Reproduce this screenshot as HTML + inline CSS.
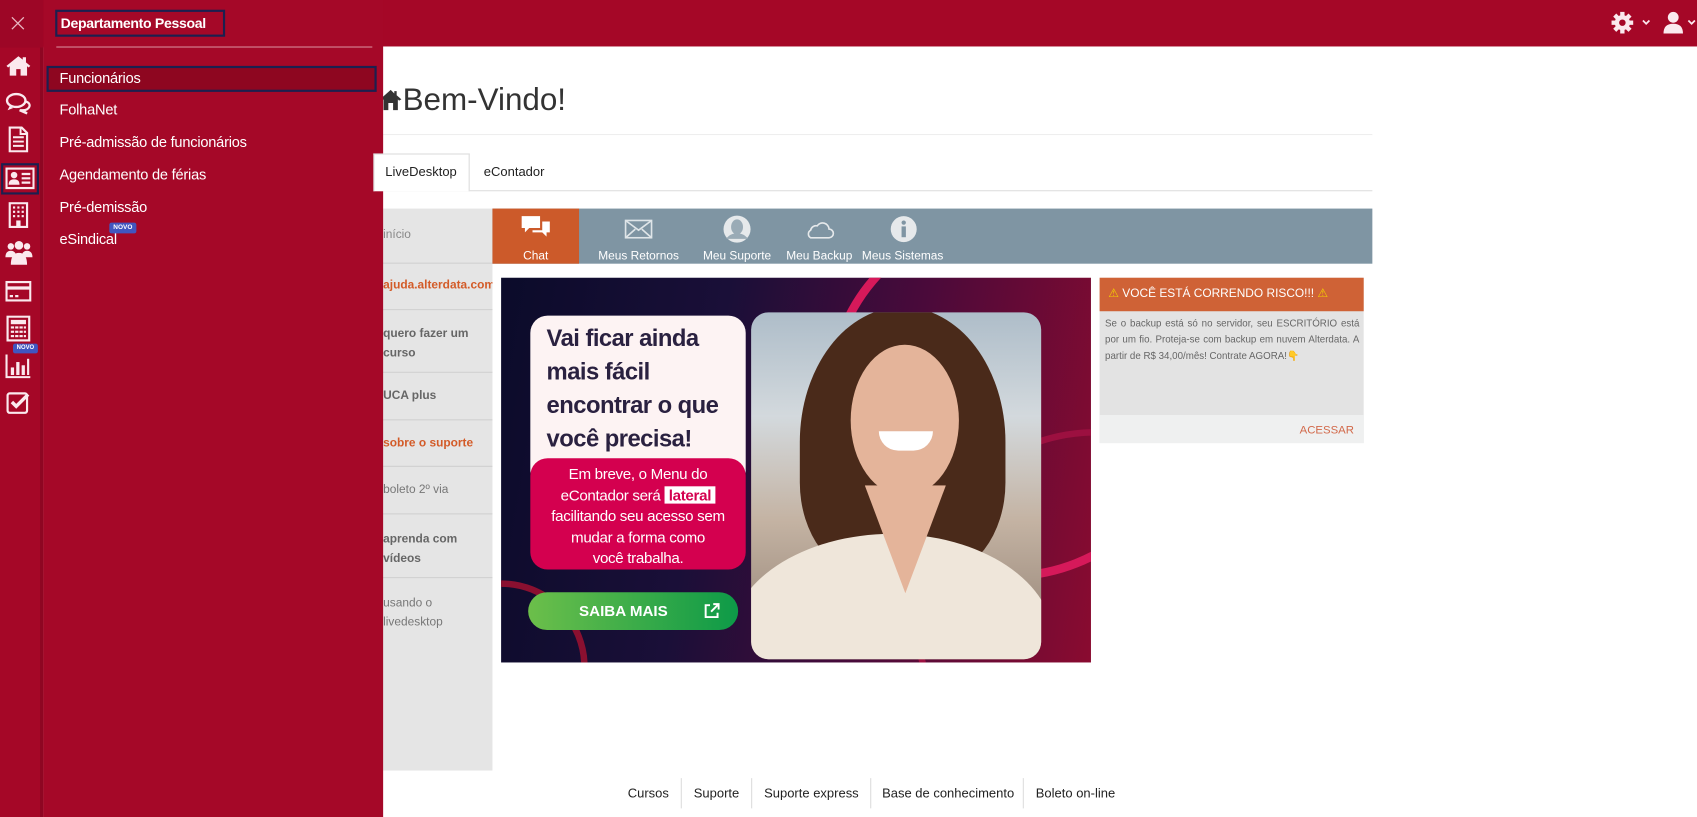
<!DOCTYPE html>
<html><head><meta charset="utf-8"><style>
*{margin:0;padding:0;box-sizing:border-box}
html,body{width:1697px;height:817px;overflow:hidden;background:#fff}
#s{position:absolute;left:0;top:0;width:1568px;height:756px;transform:scale(1.0823,1.0807);transform-origin:0 0;font-family:"Liberation Sans",sans-serif;background:#fff}
.a{position:absolute}
.top{left:0;top:0;width:1568px;height:43px;background:#a50727}
.strip{left:0;top:0;width:40px;height:756px;background:#a50727;border-right:3px solid #8e0622}
.panel{left:40px;top:0;width:314px;height:756px;background:#a50828}
.mi{position:absolute;left:55px;color:#fff;font-size:13.5px;letter-spacing:-0.2px;white-space:nowrap}
.ic{position:absolute;left:5px;width:24px;height:24px}
.gm{position:absolute;left:354px;width:101px;border-bottom:1px solid #d0d0d0;font-size:11px;color:#777;padding-left:0}
.tb{position:absolute;top:231px;color:#fff;font-size:11px;text-align:center}
.fl{position:absolute;top:727px;font-size:12px;color:#222}
.sep{position:absolute;top:720px;width:1px;height:28px;background:#ddd}
</style></head><body><div id="s">

<div class="a" style="left:350px;top:77px;font-size:29px;color:#333;white-space:nowrap">
<svg width="22" height="22" viewBox="0 0 20 20" style="vertical-align:-1px"><path d="M10 2 L1 10 L3 11 L4 10 V19 H8 V13 H12 V19 H16 V10 L17 11 L19 10 L15 6.5 V3 H13 V5 Z" fill="#333"/></svg>Bem-Vindo!</div>
<div class="a" style="left:354px;top:124px;width:914px;height:1px;background:#eee"></div>
<div class="a" style="left:345px;top:142px;width:89px;height:35px;border:1px solid #ddd;border-bottom:none;background:#fff;z-index:2"></div>
<div class="a" style="left:356px;top:152px;font-size:12px;color:#222;z-index:3">LiveDesktop</div>
<div class="a" style="left:447px;top:152px;font-size:12px;color:#222">eContador</div>
<div class="a" style="left:354px;top:176px;width:914px;height:1px;background:#ddd"></div>

<div class="a" style="left:354px;top:193px;width:101px;height:520px;background:#e5e5e5"></div>
<div class="gm" style="top:193px;height:51px;padding-top:18px;color:#888">início</div>
<div class="gm" style="top:244px;height:43px;padding-top:14px;color:#d35b28;font-weight:bold;white-space:nowrap;overflow:hidden">ajuda.alterdata.com.</div>
<div class="gm" style="top:287px;height:58px;padding-top:13px;color:#666;font-weight:bold;line-height:18px">quero fazer um<br>curso</div>
<div class="gm" style="top:345px;height:44px;padding-top:15px;color:#666;font-weight:bold">UCA plus</div>
<div class="gm" style="top:389px;height:43px;padding-top:15px;color:#d35b28;font-weight:bold">sobre o suporte</div>
<div class="gm" style="top:432px;height:44px;padding-top:15px;color:#777">boleto 2º via</div>
<div class="gm" style="top:476px;height:59px;padding-top:14px;color:#666;font-weight:bold;line-height:18px">aprenda com<br>vídeos</div>
<div class="gm" style="top:535px;height:60px;padding-top:14px;color:#777;border:none;line-height:18px">usando o<br>livedesktop</div>

<div class="a" style="left:455px;top:193px;width:813px;height:51px;background:#7f95a3"></div>
<div class="a" style="left:455px;top:193px;width:80px;height:51px;background:#cc5a2a"></div>
<svg class="a" style="left:480px;top:198px" width="30" height="26" viewBox="0 0 30 26"><path d="M2 2h17v11H9l-4 4v-4H2z" fill="#fff"/><path d="M21 7h7v10h-3v4l-4-4h-9v-2h9z" fill="#fff"/></svg>
<div class="tb" style="left:455px;width:80px">Chat</div>
<svg class="a" style="left:577px;top:203px" width="26" height="18" viewBox="0 0 26 18"><rect x="1" y="1" width="24" height="16" fill="none" stroke="#dfe5e8" stroke-width="1.5"/><path d="M1 1l12 9 12-9M1 17l9-8M25 17l-9-8" stroke="#dfe5e8" stroke-width="1.5" fill="none"/></svg>
<div class="tb" style="left:545px;width:90px">Meus Retornos</div>
<svg class="a" style="left:668px;top:199px" width="26" height="26" viewBox="0 0 26 26"><circle cx="13" cy="13" r="12.5" fill="#e6e9eb"/><ellipse cx="13" cy="11" rx="5.5" ry="7" fill="#9aabb6"/><path d="M3 22c3-4 6-5 10-5s7 1 10 5" fill="#9aabb6"/></svg>
<div class="tb" style="left:645px;width:72px">Meu Suporte</div>
<svg class="a" style="left:743px;top:203px" width="28" height="18" viewBox="0 0 28 18"><path d="M6 17h17a4 4 0 0 0 0-8 6 6 0 0 0-11-3 5 5 0 0 0-6 4 4 4 0 0 0 0 7z" fill="none" stroke="#e6e9eb" stroke-width="1.5"/></svg>
<div class="tb" style="left:722px;width:70px">Meu Backup</div>
<svg class="a" style="left:822px;top:199px" width="26" height="26" viewBox="0 0 26 26"><circle cx="13" cy="13" r="12" fill="#e6e9eb"/><circle cx="13" cy="7" r="2" fill="#7f95a3"/><rect x="11" y="10.5" width="4" height="10" fill="#7f95a3"/></svg>
<div class="tb" style="left:794px;width:80px">Meus Sistemas</div>

<div class="a" style="left:463px;top:257px;width:545px;height:356px;background:linear-gradient(100deg,#0b0b2a 0%,#1a0f38 35%,#4a0a3a 65%,#8a0b30 100%);overflow:hidden">
 <div class="a" style="left:300px;top:-60px;width:340px;height:340px;border-radius:50%;border:8px solid #d6195a"></div>
 <div class="a" style="left:380px;top:140px;width:340px;height:340px;border-radius:50%;border:6px solid #9c1040"></div>
 <div class="a" style="left:-80px;top:280px;width:160px;height:160px;border-radius:50%;border:6px solid #8a1030"></div>
 <div class="a" style="left:231px;top:32px;width:268px;height:321px;border-radius:16px;background:linear-gradient(180deg,#aebdc9 0%,#d3d9dd 30%,#c4b3a3 60%,#8e7d70 100%);overflow:hidden">
  <div class="a" style="left:45px;top:-5px;width:190px;height:250px;border-radius:50% 50% 35% 35%;background:#4a2a1a"></div>
  <div class="a" style="left:92px;top:30px;width:100px;height:140px;border-radius:50%;background:#e4b49a"></div>
  <div class="a" style="left:118px;top:110px;width:50px;height:18px;border-radius:0 0 25px 25px;background:#fff"></div>
  <div class="a" style="left:-20px;top:205px;width:300px;height:200px;border-radius:50% 50% 0 0;background:#efe6da"></div>
  <div class="a" style="left:105px;top:160px;width:75px;height:100px;background:#e4b49a;clip-path:polygon(0 0,100% 0,50% 100%)"></div>
 </div>
 <div class="a" style="left:27px;top:35px;width:199px;height:160px;border-radius:16px;background:#fdf3f3"></div>
 <div class="a" style="left:42px;top:40px;font-size:22px;font-weight:bold;color:#2a2140;line-height:31px;letter-spacing:-0.5px">Vai ficar ainda<br>mais fácil<br>encontrar o que<br>você precisa!</div>
 <div class="a" style="left:27px;top:167px;width:199px;height:103px;border-radius:16px;background:#d4004f;color:#fff;font-size:14px;line-height:19.5px;text-align:center;padding-top:5px;letter-spacing:-0.3px">Em breve, o Menu do<br>eContador será <span style="background:#fff;color:#d4004f;font-weight:bold;padding:0 4px">lateral</span><br>facilitando seu acesso sem<br>mudar a forma como<br>você trabalha.</div>
 <div class="a" style="left:25px;top:291px;width:194px;height:35px;border-radius:18px;background:linear-gradient(90deg,#6cbf4a,#0d9a48);color:#fff;font-weight:bold;font-size:14px;line-height:35px;padding-left:47px">SAIBA MAIS
  <svg style="position:absolute;left:162px;top:10px" width="15" height="15" viewBox="0 0 15 15"><path d="M6 2H2v11h11V9M9 1h5v5M14 1L7 8" stroke="#fff" stroke-width="1.8" fill="none"/></svg></div>
</div>

<div class="a" style="left:1016px;top:257px;width:244px;height:153px;background:#e3e3e3"></div>
<div class="a" style="left:1016px;top:257px;width:244px;height:31px;background:#cf6236;color:#fff;font-size:11px;line-height:31px;padding-left:8px;white-space:nowrap"><span style="color:#f4d000">⚠</span> VOCÊ ESTÁ CORRENDO RISCO!!! <span style="color:#f4d000">⚠</span></div>
<div class="a" style="left:1021px;top:292px;width:235px;font-size:9px;color:#666;line-height:15px;text-align:justify">Se o backup está só no servidor, seu ESCRITÓRIO está por um fio. Proteja-se com backup em nuvem Alterdata. A partir de R$ 34,00/mês! Contrate AGORA!👇</div>
<div class="a" style="left:1016px;top:384px;width:244px;height:26px;background:#eff0f0;color:#d2694a;font-size:10.5px;text-align:right;padding:8px 9px 0 0">ACESSAR</div>

<div class="fl" style="left:580px">Cursos</div>
<div class="sep" style="left:629px"></div>
<div class="fl" style="left:641px">Suporte</div>
<div class="sep" style="left:694px"></div>
<div class="fl" style="left:706px">Suporte express</div>
<div class="sep" style="left:804px"></div>
<div class="fl" style="left:815px">Base de conhecimento</div>
<div class="sep" style="left:945px"></div>
<div class="fl" style="left:957px">Boleto on-line</div>

<div class="a top"></div>
<svg class="a" style="left:1488px;top:10px" width="22" height="22" viewBox="0 0 22 22"><g fill="#fbe9ee"><circle cx="11" cy="11" r="7"/><rect x="9" y="1" width="4" height="20"/><rect x="1" y="9" width="20" height="4"/><rect x="9" y="1" width="4" height="20" transform="rotate(45 11 11)"/><rect x="9" y="1" width="4" height="20" transform="rotate(-45 11 11)"/></g><circle cx="11" cy="11" r="3" fill="#a50727"/></svg>
<svg class="a" style="left:1516px;top:17px" width="10" height="7" viewBox="0 0 10 7"><path d="M2 2l3 3 3-3" stroke="#fbe9ee" stroke-width="1.6" fill="none"/></svg>
<svg class="a" style="left:1536px;top:10px" width="20" height="22" viewBox="0 0 20 22"><circle cx="10" cy="6" r="5" fill="#fbe9ee"/><path d="M1 21c0-6 3-9 9-9s9 3 9 9z" fill="#fbe9ee"/></svg>
<svg class="a" style="left:1558px;top:17px" width="10" height="7" viewBox="0 0 10 7"><path d="M2 2l3 3 3-3" stroke="#fbe9ee" stroke-width="1.6" fill="none"/></svg>

<div class="a strip"></div>
<div class="a" style="left:0;top:0;width:40px;height:44px;background:#9d0626"></div>
<svg class="a" style="left:10px;top:15px" width="13" height="13" viewBox="0 0 13 13"><path d="M1 1l11 11M12 1L1 12" stroke="#e9b7c2" stroke-width="1.2"/></svg>
<svg class="ic" style="top:49px" viewBox="0 0 24 24"><path d="M12 3L1 12l1.5 1.5L4 12.3V21h6v-6h4v6h6v-8.7l1.5 1.2L23 12l-4-3.3V4h-3v2.2z" fill="#fbe9ee"/></svg>
<svg class="ic" style="top:84px" viewBox="0 0 24 24"><ellipse cx="10" cy="9" rx="8.5" ry="6" fill="none" stroke="#fbe9ee" stroke-width="2.2"/><path d="M4 14l-2 4 5-2" fill="#fbe9ee"/><path d="M19 10c3 1 4 3 3 5-1 2-3 3-6 3l4 3-7-3" fill="none" stroke="#fbe9ee" stroke-width="2"/></svg>
<svg class="ic" style="top:117px" viewBox="0 0 24 24"><path d="M4 1h11l5 5v17H4z" fill="none" stroke="#fbe9ee" stroke-width="2"/><path d="M7 10h10M7 14h10M7 18h10M14 1v6h6" stroke="#fbe9ee" stroke-width="1.8" fill="none"/></svg>
<div class="a" style="left:1px;top:151px;width:35px;height:29px;border:2px solid #1b2050"></div>
<svg class="ic" style="top:153px;left:5px;width:27px" viewBox="0 0 27 24"><rect x="1" y="3" width="25" height="18" fill="none" stroke="#fbe9ee" stroke-width="2"/><circle cx="8" cy="9" r="3" fill="#fbe9ee"/><path d="M3 18c0-4 2-5 5-5s5 1 5 5z" fill="#fbe9ee"/><path d="M15 8h8M15 12h8M15 16h8" stroke="#fbe9ee" stroke-width="2"/></svg>
<svg class="ic" style="top:187px" viewBox="0 0 24 24"><rect x="4" y="1" width="16" height="22" fill="none" stroke="#fbe9ee" stroke-width="2"/><g fill="#fbe9ee"><rect x="7" y="4" width="2" height="2"/><rect x="11" y="4" width="2" height="2"/><rect x="15" y="4" width="2" height="2"/><rect x="7" y="8" width="2" height="2"/><rect x="11" y="8" width="2" height="2"/><rect x="15" y="8" width="2" height="2"/><rect x="7" y="12" width="2" height="2"/><rect x="11" y="12" width="2" height="2"/><rect x="15" y="12" width="2" height="2"/><rect x="10" y="17" width="4" height="6"/></g></svg>
<svg class="ic" style="top:222px;left:4px;width:27px" viewBox="0 0 27 24"><g fill="#fbe9ee"><circle cx="6" cy="6" r="3"/><circle cx="21" cy="6" r="3"/><circle cx="13.5" cy="5" r="4"/><path d="M1 16c0-4 2-6 5-6s5 2 5 6z"/><path d="M16 16c0-4 2-6 5-6s5 2 5 6z"/><path d="M6 23c0-8 3-11 7.5-11S21 15 21 23z"/></g></svg>
<svg class="ic" style="top:257px" viewBox="0 0 24 24"><rect x="1" y="4" width="22" height="17" fill="none" stroke="#fbe9ee" stroke-width="2"/><rect x="1" y="8" width="22" height="3" fill="#fbe9ee"/><path d="M4 17h3M9 17h3" stroke="#fbe9ee" stroke-width="2"/></svg>
<svg class="ic" style="top:292px" viewBox="0 0 24 24"><rect x="2" y="1" width="20" height="22" fill="none" stroke="#fbe9ee" stroke-width="2"/><rect x="5" y="4" width="14" height="4" fill="#fbe9ee"/><g fill="#fbe9ee"><rect x="5" y="10" width="3" height="2"/><rect x="9" y="10" width="3" height="2"/><rect x="13" y="10" width="3" height="2"/><rect x="17" y="10" width="2" height="2"/><rect x="5" y="14" width="3" height="2"/><rect x="9" y="14" width="3" height="2"/><rect x="13" y="14" width="3" height="2"/><rect x="17" y="14" width="2" height="2"/><rect x="5" y="18" width="3" height="2"/><rect x="9" y="18" width="3" height="2"/><rect x="13" y="18" width="3" height="2"/><rect x="17" y="18" width="2" height="2"/></g></svg>
<div class="a" style="left:12px;top:318px;width:23px;height:9px;background:#4156c0;border-radius:2px;color:#fff;font-size:5.5px;font-weight:bold;text-align:center;line-height:9px">NOVO</div>
<svg class="ic" style="top:326px" viewBox="0 0 24 24"><path d="M1 2v21h22" stroke="#fbe9ee" stroke-width="2" fill="none"/><g fill="#fbe9ee"><rect x="5" y="14" width="3" height="7"/><rect x="10" y="9" width="3" height="12"/><rect x="15" y="12" width="3" height="9"/><rect x="20" y="6" width="2" height="15"/></g></svg>
<svg class="ic" style="top:361px" viewBox="0 0 24 24"><rect x="2" y="3" width="18" height="18" rx="2" fill="none" stroke="#fbe9ee" stroke-width="2"/><path d="M6 11l4 4 11-11" stroke="#fbe9ee" stroke-width="3.2" fill="none"/></svg>

<div class="a panel"></div>
<div class="a" style="left:51px;top:9px;width:157px;height:25px;border:2px solid #1b2050;color:#fff;font-weight:bold;font-size:13px;letter-spacing:-0.3px;line-height:21px;padding-left:3px;white-space:nowrap">Departamento Pessoal</div>
<div class="a" style="left:52px;top:43px;width:292px;height:1px;background:#d88a98"></div>
<div class="a" style="left:43px;top:61px;width:305px;height:24px;background:#8e0620;border:2px solid #1b2050"></div>
<div class="mi" style="top:65px">Funcionários</div>
<div class="mi" style="top:94px">FolhaNet</div>
<div class="mi" style="top:124px">Pré-admissão de funcionários</div>
<div class="mi" style="top:154px">Agendamento de férias</div>
<div class="mi" style="top:184px">Pré-demissão</div>
<div class="mi" style="top:214px">eSindical</div>
<div class="a" style="left:101px;top:206px;width:25px;height:10px;background:#4156c0;border-radius:2px;color:#fff;font-size:6px;font-weight:bold;text-align:center;line-height:10px">NOVO</div>

</div></body></html>
